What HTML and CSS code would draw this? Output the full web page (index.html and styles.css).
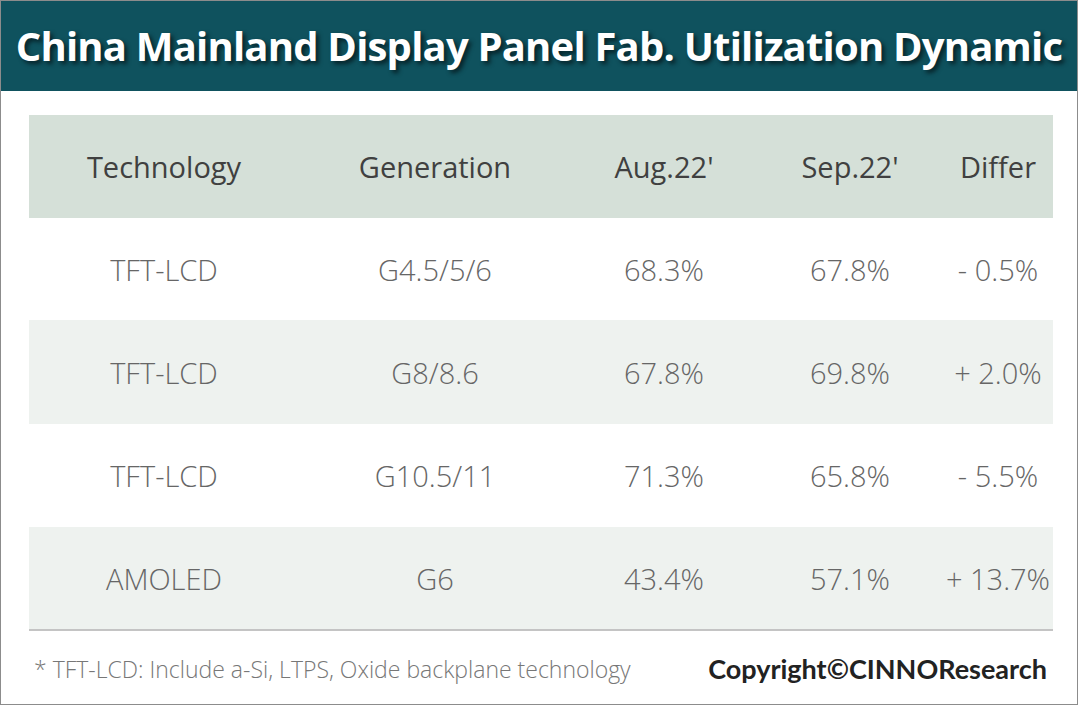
FILE: index.html
```html
<!DOCTYPE html>
<html>
<head>
<meta charset="utf-8">
<link rel="stylesheet" href="styles.css">
</head>
<body>
<div class="frame">
  <header class="banner">
    <h1 class="title">China Mainland Display Panel Fab. Utilization Dynamic</h1>
  </header>
  <div class="table">
    <div class="row head">
      <div class="c c1">Technology</div>
      <div class="c c2">Generation</div>
      <div class="c c3">Aug.22'</div>
      <div class="c c4">Sep.22'</div>
      <div class="c c5">Differ</div>
    </div>
    <div class="row r2">
      <div class="c c1">TFT-LCD</div>
      <div class="c c2">G4.5/5/6</div>
      <div class="c c3">68.3%</div>
      <div class="c c4">67.8%</div>
      <div class="c c5">- 0.5%</div>
    </div>
    <div class="row alt r3">
      <div class="c c1">TFT-LCD</div>
      <div class="c c2">G8/8.6</div>
      <div class="c c3">67.8%</div>
      <div class="c c4">69.8%</div>
      <div class="c c5">+ 2.0%</div>
    </div>
    <div class="row r4">
      <div class="c c1">TFT-LCD</div>
      <div class="c c2">G10.5/11</div>
      <div class="c c3">71.3%</div>
      <div class="c c4">65.8%</div>
      <div class="c c5">- 5.5%</div>
    </div>
    <div class="row alt r5">
      <div class="c c1">AMOLED</div>
      <div class="c c2">G6</div>
      <div class="c c3">43.4%</div>
      <div class="c c4">57.1%</div>
      <div class="c c5">+ 13.7%</div>
    </div>
  </div>
  <footer class="foot">
    <span class="note">* TFT-LCD: Include a-Si, LTPS, Oxide backplane technology</span>
    <span class="copy">Copyright©CINNOResearch</span>
  </footer>
</div>
</body>
</html>
```
FILE: styles.css
```css
html, body {
  margin: 0;
  padding: 0;
  background: #ffffff;
}
.frame {
  box-sizing: border-box;
  width: 1078px;
  height: 705px;
  border: 1.5px solid #8c8c8c;
  background: #ffffff;
  display: flex;
  flex-direction: column;
}
.banner {
  height: 90px;
  background: #0f525e;
  display: flex;
  align-items: center;
  justify-content: center;
}
.title {
  margin: 0 0 2px 0;
  font-family: "Open Sans", "Noto Sans", sans-serif;
  font-weight: 700;
  font-size: 40px;
  color: #ffffff;
  letter-spacing: -0.8px;
  text-shadow: 3px 3px 4px rgba(5, 30, 35, 0.9);
  white-space: nowrap;
}
.table {
  margin: 24px 0 0 28px;
  width: 1024px;
  border-bottom: 2px solid #c4c4c4;
}
.row {
  display: flex;
  height: 103px;
  align-items: center;
  font-family: "Open Sans", "Noto Sans", sans-serif;
  font-weight: 300;
  font-size: 29px;
  color: #666666;
}
.row.head {
  background: #d5e0d8;
  color: #404040;
  font-weight: 400;
  height: 103px;
}
.row.r2 { height: 102px; }
.row.r3 { height: 104px; }
.row.r4 { height: 103px; }
.row.r5 { height: 102px; }
.row.alt {
  background: #eef2ef;
}
.c {
  text-align: center;
  white-space: nowrap;
}
.c1 { width: 270px; }
.c2 { width: 272px; }
.c3 { width: 186px; }
.c4 { width: 186px; }
.c5 { width: 110px; }
.foot {
  flex: 1;
  display: flex;
  align-items: center;
  justify-content: space-between;
  padding: 2px 30px 0 33px;
}
.note {
  font-family: "Open Sans", "Noto Sans", sans-serif;
  font-weight: 300;
  font-size: 23px;
  color: #777777;
}
.copy {
  font-family: Lato, "Liberation Sans", sans-serif;
  font-weight: 700;
  font-size: 27px;
  color: #222222;
}
```
